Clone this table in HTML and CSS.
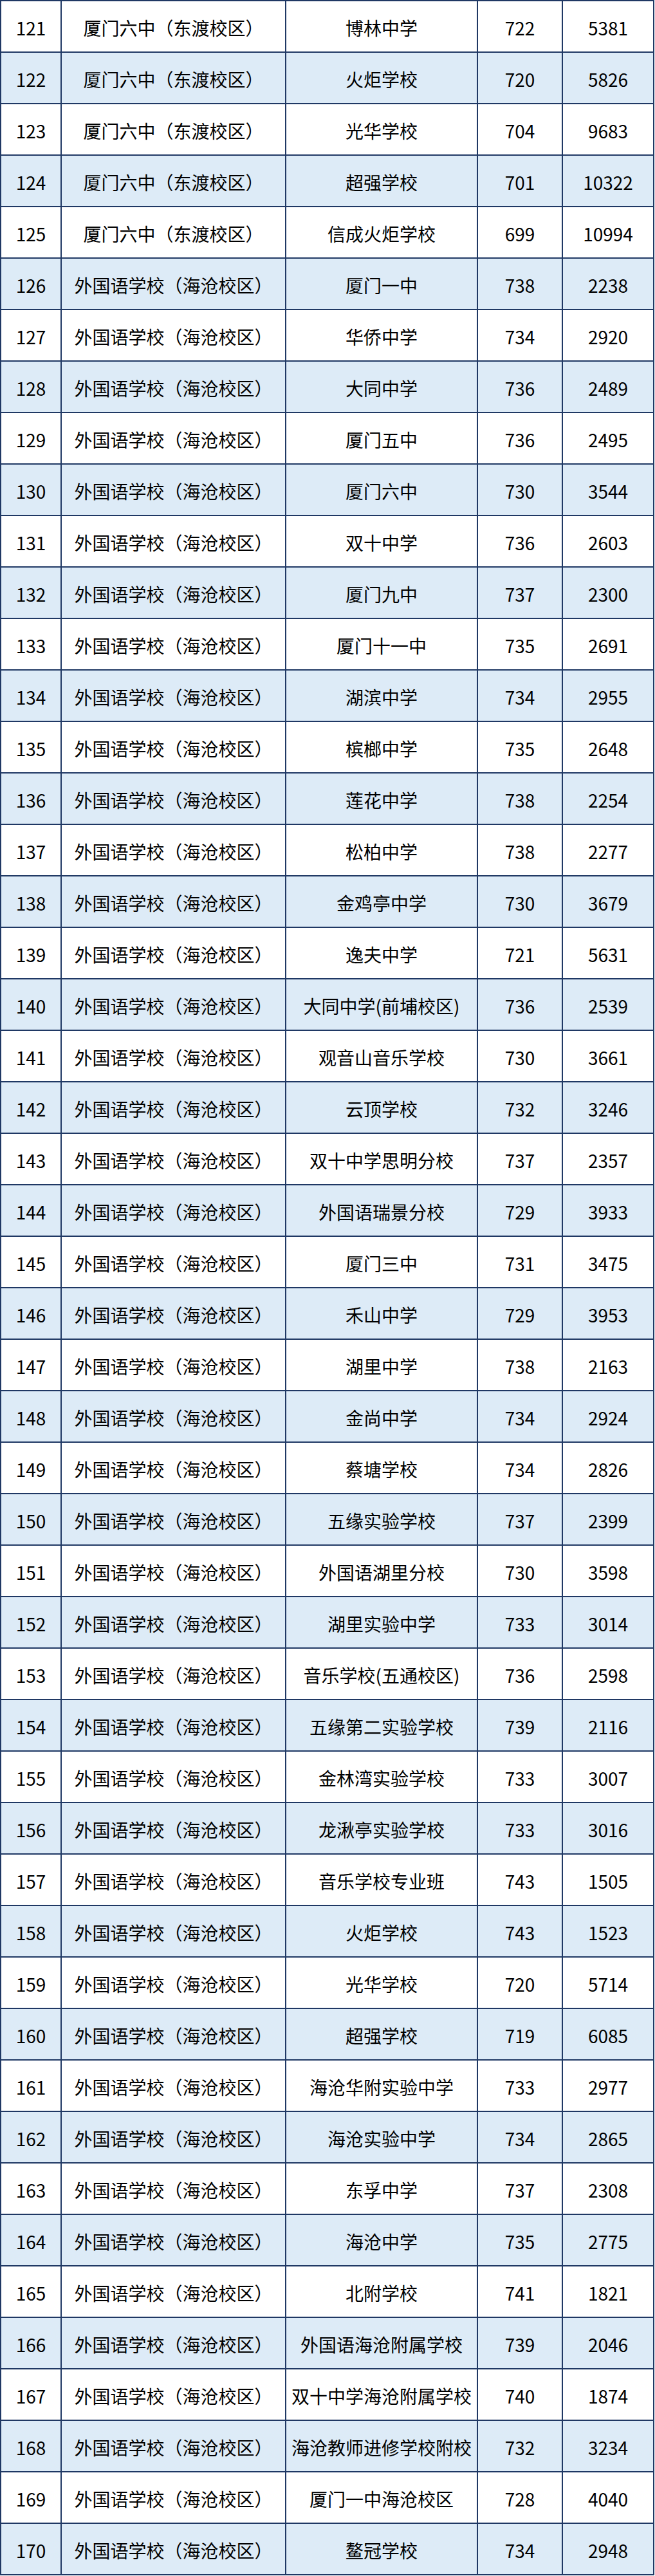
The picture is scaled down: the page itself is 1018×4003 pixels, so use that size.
FILE: index.html
```html
<!DOCTYPE html>
<html lang="zh-CN">
<head>
<meta charset="utf-8">
<title>录取分数</title>
<link rel="stylesheet" href="styles.css">
</head>
<body>
<div class="table">
<div class="row"><div class="c">121</div><div class="c">厦门六中（东渡校区）</div><div class="c">博林中学</div><div class="c">722</div><div class="c">5381</div></div>
<div class="row alt"><div class="c">122</div><div class="c">厦门六中（东渡校区）</div><div class="c">火炬学校</div><div class="c">720</div><div class="c">5826</div></div>
<div class="row"><div class="c">123</div><div class="c">厦门六中（东渡校区）</div><div class="c">光华学校</div><div class="c">704</div><div class="c">9683</div></div>
<div class="row alt"><div class="c">124</div><div class="c">厦门六中（东渡校区）</div><div class="c">超强学校</div><div class="c">701</div><div class="c">10322</div></div>
<div class="row"><div class="c">125</div><div class="c">厦门六中（东渡校区）</div><div class="c">信成火炬学校</div><div class="c">699</div><div class="c">10994</div></div>
<div class="row alt"><div class="c">126</div><div class="c">外国语学校（海沧校区）</div><div class="c">厦门一中</div><div class="c">738</div><div class="c">2238</div></div>
<div class="row"><div class="c">127</div><div class="c">外国语学校（海沧校区）</div><div class="c">华侨中学</div><div class="c">734</div><div class="c">2920</div></div>
<div class="row alt"><div class="c">128</div><div class="c">外国语学校（海沧校区）</div><div class="c">大同中学</div><div class="c">736</div><div class="c">2489</div></div>
<div class="row"><div class="c">129</div><div class="c">外国语学校（海沧校区）</div><div class="c">厦门五中</div><div class="c">736</div><div class="c">2495</div></div>
<div class="row alt"><div class="c">130</div><div class="c">外国语学校（海沧校区）</div><div class="c">厦门六中</div><div class="c">730</div><div class="c">3544</div></div>
<div class="row"><div class="c">131</div><div class="c">外国语学校（海沧校区）</div><div class="c">双十中学</div><div class="c">736</div><div class="c">2603</div></div>
<div class="row alt"><div class="c">132</div><div class="c">外国语学校（海沧校区）</div><div class="c">厦门九中</div><div class="c">737</div><div class="c">2300</div></div>
<div class="row"><div class="c">133</div><div class="c">外国语学校（海沧校区）</div><div class="c">厦门十一中</div><div class="c">735</div><div class="c">2691</div></div>
<div class="row alt"><div class="c">134</div><div class="c">外国语学校（海沧校区）</div><div class="c">湖滨中学</div><div class="c">734</div><div class="c">2955</div></div>
<div class="row"><div class="c">135</div><div class="c">外国语学校（海沧校区）</div><div class="c">槟榔中学</div><div class="c">735</div><div class="c">2648</div></div>
<div class="row alt"><div class="c">136</div><div class="c">外国语学校（海沧校区）</div><div class="c">莲花中学</div><div class="c">738</div><div class="c">2254</div></div>
<div class="row"><div class="c">137</div><div class="c">外国语学校（海沧校区）</div><div class="c">松柏中学</div><div class="c">738</div><div class="c">2277</div></div>
<div class="row alt"><div class="c">138</div><div class="c">外国语学校（海沧校区）</div><div class="c">金鸡亭中学</div><div class="c">730</div><div class="c">3679</div></div>
<div class="row"><div class="c">139</div><div class="c">外国语学校（海沧校区）</div><div class="c">逸夫中学</div><div class="c">721</div><div class="c">5631</div></div>
<div class="row alt"><div class="c">140</div><div class="c">外国语学校（海沧校区）</div><div class="c">大同中学(前埔校区)</div><div class="c">736</div><div class="c">2539</div></div>
<div class="row"><div class="c">141</div><div class="c">外国语学校（海沧校区）</div><div class="c">观音山音乐学校</div><div class="c">730</div><div class="c">3661</div></div>
<div class="row alt"><div class="c">142</div><div class="c">外国语学校（海沧校区）</div><div class="c">云顶学校</div><div class="c">732</div><div class="c">3246</div></div>
<div class="row"><div class="c">143</div><div class="c">外国语学校（海沧校区）</div><div class="c">双十中学思明分校</div><div class="c">737</div><div class="c">2357</div></div>
<div class="row alt"><div class="c">144</div><div class="c">外国语学校（海沧校区）</div><div class="c">外国语瑞景分校</div><div class="c">729</div><div class="c">3933</div></div>
<div class="row"><div class="c">145</div><div class="c">外国语学校（海沧校区）</div><div class="c">厦门三中</div><div class="c">731</div><div class="c">3475</div></div>
<div class="row alt"><div class="c">146</div><div class="c">外国语学校（海沧校区）</div><div class="c">禾山中学</div><div class="c">729</div><div class="c">3953</div></div>
<div class="row"><div class="c">147</div><div class="c">外国语学校（海沧校区）</div><div class="c">湖里中学</div><div class="c">738</div><div class="c">2163</div></div>
<div class="row alt"><div class="c">148</div><div class="c">外国语学校（海沧校区）</div><div class="c">金尚中学</div><div class="c">734</div><div class="c">2924</div></div>
<div class="row"><div class="c">149</div><div class="c">外国语学校（海沧校区）</div><div class="c">蔡塘学校</div><div class="c">734</div><div class="c">2826</div></div>
<div class="row alt"><div class="c">150</div><div class="c">外国语学校（海沧校区）</div><div class="c">五缘实验学校</div><div class="c">737</div><div class="c">2399</div></div>
<div class="row"><div class="c">151</div><div class="c">外国语学校（海沧校区）</div><div class="c">外国语湖里分校</div><div class="c">730</div><div class="c">3598</div></div>
<div class="row alt"><div class="c">152</div><div class="c">外国语学校（海沧校区）</div><div class="c">湖里实验中学</div><div class="c">733</div><div class="c">3014</div></div>
<div class="row"><div class="c">153</div><div class="c">外国语学校（海沧校区）</div><div class="c">音乐学校(五通校区)</div><div class="c">736</div><div class="c">2598</div></div>
<div class="row alt"><div class="c">154</div><div class="c">外国语学校（海沧校区）</div><div class="c">五缘第二实验学校</div><div class="c">739</div><div class="c">2116</div></div>
<div class="row"><div class="c">155</div><div class="c">外国语学校（海沧校区）</div><div class="c">金林湾实验学校</div><div class="c">733</div><div class="c">3007</div></div>
<div class="row alt"><div class="c">156</div><div class="c">外国语学校（海沧校区）</div><div class="c">龙湫亭实验学校</div><div class="c">733</div><div class="c">3016</div></div>
<div class="row"><div class="c">157</div><div class="c">外国语学校（海沧校区）</div><div class="c">音乐学校专业班</div><div class="c">743</div><div class="c">1505</div></div>
<div class="row alt"><div class="c">158</div><div class="c">外国语学校（海沧校区）</div><div class="c">火炬学校</div><div class="c">743</div><div class="c">1523</div></div>
<div class="row"><div class="c">159</div><div class="c">外国语学校（海沧校区）</div><div class="c">光华学校</div><div class="c">720</div><div class="c">5714</div></div>
<div class="row alt"><div class="c">160</div><div class="c">外国语学校（海沧校区）</div><div class="c">超强学校</div><div class="c">719</div><div class="c">6085</div></div>
<div class="row"><div class="c">161</div><div class="c">外国语学校（海沧校区）</div><div class="c">海沧华附实验中学</div><div class="c">733</div><div class="c">2977</div></div>
<div class="row alt"><div class="c">162</div><div class="c">外国语学校（海沧校区）</div><div class="c">海沧实验中学</div><div class="c">734</div><div class="c">2865</div></div>
<div class="row"><div class="c">163</div><div class="c">外国语学校（海沧校区）</div><div class="c">东孚中学</div><div class="c">737</div><div class="c">2308</div></div>
<div class="row alt"><div class="c">164</div><div class="c">外国语学校（海沧校区）</div><div class="c">海沧中学</div><div class="c">735</div><div class="c">2775</div></div>
<div class="row"><div class="c">165</div><div class="c">外国语学校（海沧校区）</div><div class="c">北附学校</div><div class="c">741</div><div class="c">1821</div></div>
<div class="row alt"><div class="c">166</div><div class="c">外国语学校（海沧校区）</div><div class="c">外国语海沧附属学校</div><div class="c">739</div><div class="c">2046</div></div>
<div class="row"><div class="c">167</div><div class="c">外国语学校（海沧校区）</div><div class="c">双十中学海沧附属学校</div><div class="c">740</div><div class="c">1874</div></div>
<div class="row alt"><div class="c">168</div><div class="c">外国语学校（海沧校区）</div><div class="c">海沧教师进修学校附校</div><div class="c">732</div><div class="c">3234</div></div>
<div class="row"><div class="c">169</div><div class="c">外国语学校（海沧校区）</div><div class="c">厦门一中海沧校区</div><div class="c">728</div><div class="c">4040</div></div>
<div class="row alt"><div class="c">170</div><div class="c">外国语学校（海沧校区）</div><div class="c">鳌冠学校</div><div class="c">734</div><div class="c">2948</div></div>
</div>
</body>
</html>
```
FILE: styles.css
```css
html, body {
  margin: 0;
  padding: 0;
  background: #ffffff;
}
.table {
  width: 1017px;
  box-sizing: border-box;
  border-left: 2px solid #1f3864;
  border-top: 2px solid #1f3864;
  font-family: "Noto Sans CJK SC", "Noto Sans", sans-serif;
  font-size: 28px;
  color: #000000;
}
.row {
  display: grid;
  grid-template-columns: 94px 349px 298px 132px 142px;
  height: 80px;
  box-sizing: border-box;
  border-bottom: 2px solid #1f3864;
  background: #ffffff;
}
.row.alt {
  background: #ddebf7;
}
.c {
  display: flex;
  align-items: center;
  justify-content: center;
  border-right: 2px solid #1f3864;
  white-space: nowrap;
  padding-top: 4px;
  line-height: 1;
}
```
